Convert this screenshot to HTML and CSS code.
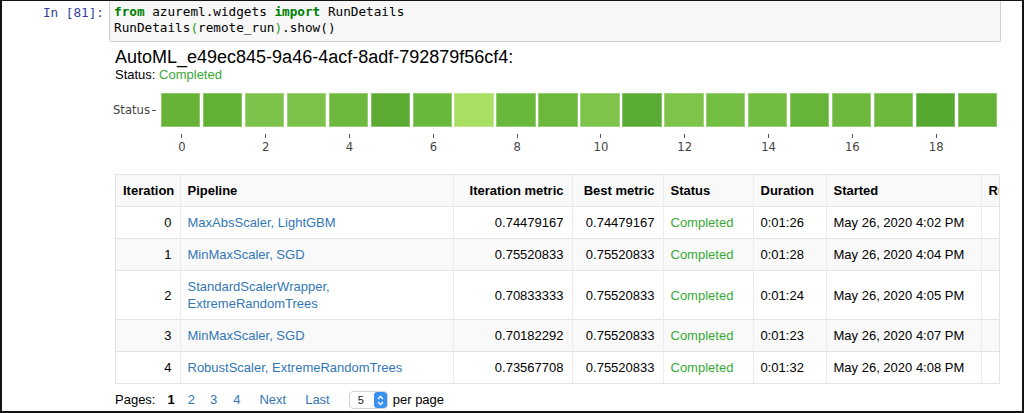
FILE: index.html
```html
<!DOCTYPE html>
<html>
<head>
<meta charset="utf-8">
<link rel="stylesheet" href="styles.css">
</head>
<body>
<div class="frame">
  <div class="cell">
    <div class="prompt">In&nbsp;[81]:</div>
    <div class="input-area">
      <div class="code"><span class="kw">from</span> azureml.widgets <span class="kw">import</span> RunDetails</div>
      <div class="code">RunDetails<span class="br">(</span>remote_run<span class="br">)</span>.show()</div>
    </div>
  </div>

  <div class="output">
    <div class="run-title">AutoML_e49ec845-9a46-4acf-8adf-792879f56cf4:</div>
    <div class="run-status">Status: <span class="ok">Completed</span></div>

    <div class="chart">
      <div class="y-axis"><span class="y-label">Status</span><span class="y-tick"></span></div>
      <div class="plot">
        <div class="cells">
          <div class="hm" style="background:#67b337"></div>
          <div class="hm" style="background:#62b034"></div>
          <div class="hm" style="background:#7dc24a"></div>
          <div class="hm" style="background:#7cc149"></div>
          <div class="hm" style="background:#6cb93d"></div>
          <div class="hm" style="background:#5caa31"></div>
          <div class="hm" style="background:#69b73b"></div>
          <div class="hm" style="background:#a9e064"></div>
          <div class="hm" style="background:#6ab83b"></div>
          <div class="hm" style="background:#6bb83c"></div>
          <div class="hm" style="background:#7ec34a"></div>
          <div class="hm" style="background:#5aab33"></div>
          <div class="hm" style="background:#7ec34a"></div>
          <div class="hm" style="background:#73bd42"></div>
          <div class="hm" style="background:#72bc42"></div>
          <div class="hm" style="background:#67b43a"></div>
          <div class="hm" style="background:#6db83d"></div>
          <div class="hm" style="background:#6cb83c"></div>
          <div class="hm" style="background:#55a82f"></div>
          <div class="hm" style="background:#64b236"></div>
        </div>
        <div class="x-axis">
          <div class="xt"><span class="tick"></span><span>0</span></div><div></div>
          <div class="xt"><span class="tick"></span><span>2</span></div><div></div>
          <div class="xt"><span class="tick"></span><span>4</span></div><div></div>
          <div class="xt"><span class="tick"></span><span>6</span></div><div></div>
          <div class="xt"><span class="tick"></span><span>8</span></div><div></div>
          <div class="xt"><span class="tick"></span><span>10</span></div><div></div>
          <div class="xt"><span class="tick"></span><span>12</span></div><div></div>
          <div class="xt"><span class="tick"></span><span>14</span></div><div></div>
          <div class="xt"><span class="tick"></span><span>16</span></div><div></div>
          <div class="xt"><span class="tick"></span><span>18</span></div><div></div>
        </div>
      </div>
    </div>

    <div class="table-wrap">
      <table class="runs">
        <colgroup>
          <col class="c-it"><col class="c-pipe"><col class="c-im"><col class="c-bm"><col class="c-st"><col class="c-du"><col class="c-sd"><col class="c-r">
        </colgroup>
        <thead>
          <tr>
            <th class="num">Iteration</th><th>Pipeline</th><th class="num">Iteration metric</th><th class="num">Best metric</th><th>Status</th><th>Duration</th><th>Started</th><th>Run Id</th>
          </tr>
        </thead>
        <tbody>
          <tr><td class="num">0</td><td><a>MaxAbsScaler, LightGBM</a></td><td class="num">0.74479167</td><td class="num">0.74479167</td><td class="ok">Completed</td><td>0:01:26</td><td>May 26, 2020 4:02 PM</td><td></td></tr>
          <tr><td class="num">1</td><td><a>MinMaxScaler, SGD</a></td><td class="num">0.75520833</td><td class="num">0.75520833</td><td class="ok">Completed</td><td>0:01:28</td><td>May 26, 2020 4:04 PM</td><td></td></tr>
          <tr><td class="num">2</td><td><a>StandardScalerWrapper, ExtremeRandomTrees</a></td><td class="num">0.70833333</td><td class="num">0.75520833</td><td class="ok">Completed</td><td>0:01:24</td><td>May 26, 2020 4:05 PM</td><td></td></tr>
          <tr><td class="num">3</td><td><a>MinMaxScaler, SGD</a></td><td class="num">0.70182292</td><td class="num">0.75520833</td><td class="ok">Completed</td><td>0:01:23</td><td>May 26, 2020 4:07 PM</td><td></td></tr>
          <tr><td class="num">4</td><td><a>RobustScaler, ExtremeRandomTrees</a></td><td class="num">0.73567708</td><td class="num">0.75520833</td><td class="ok">Completed</td><td>0:01:32</td><td>May 26, 2020 4:08 PM</td><td></td></tr>
        </tbody>
      </table>
    </div>

    <div class="pager">
      <span class="pages-label">Pages:</span>
      <span class="pg current">1</span>
      <a class="pg p2">2</a>
      <a class="pg p3">3</a>
      <a class="pg p4">4</a>
      <a class="pg next">Next</a>
      <a class="pg last">Last</a>
      <span class="select"><span class="sel-val">5</span><span class="stepper"><svg width="13" height="17" viewBox="0 0 13 17"><path d="M4 7 L6.5 4.5 L9 7" fill="none" stroke="#fff" stroke-width="1.3"/><path d="M4 10 L6.5 12.5 L9 10" fill="none" stroke="#fff" stroke-width="1.3"/></svg></span></span>
      <span class="per-page">per page</span>
    </div>
  </div>
</div>
</body>
</html>
```

FILE: styles.css
```css
html, body {
  margin: 0;
  padding: 0;
  background: #fff;
}
.frame {
  box-sizing: border-box;
  width: 1024px;
  height: 413px;
  border: 2px solid #141414;
  border-top-width: 1px;
  overflow: hidden;
  font-family: "Liberation Sans", Arial, sans-serif;
  color: #000;
}
.cell {
  display: flex;
  align-items: flex-start;
}
.prompt {
  width: 103px;
  flex: none;
  text-align: right;
  font-family: "DejaVu Sans Mono", "Liberation Mono", monospace;
  font-size: 12.7px;
  line-height: 15.5px;
  color: #303f9f;
  padding-top: 4px;
  padding-right: 5px;
  margin-left: -1px;
}
.input-area {
  width: 892px;
  flex: none;
  box-sizing: border-box;
  height: 41px;
  background: #f7f7f7;
  border: 1px solid #cfcfcf;
  border-top: none;
  border-radius: 0 0 2px 2px;
  padding: 3px 4px;
}
.code {
  font-family: "DejaVu Sans Mono", "Liberation Mono", monospace;
  font-size: 12.7px;
  line-height: 15.5px;
  color: #000;
  white-space: pre;
}
.kw { color: #008000; font-weight: bold; }
.br { color: #22a022; }

.output {
  padding-left: 111px;
}
.run-title {
  font-size: 18px;
  line-height: 21px;
  margin-top: 5px;
  margin-left: 2px;
}
.run-status {
  font-size: 13px;
  line-height: 16px;
  margin-top: -1px;
  margin-left: 2px;
}
.ok { color: #37a935; }

.chart {
  display: flex;
  margin-top: 10px;
  height: 70px;
  font-family: "DejaVu Sans", Verdana, sans-serif;
  font-size: 11.6px;
  color: #444;
}
.y-axis {
  width: 48px;
  flex: none;
  height: 34px;
  display: flex;
  align-items: center;
  justify-content: flex-end;
}
.y-label { margin-right: 2px; }
.y-tick {
  width: 5px;
  height: 1px;
  background: #555;
  margin-right: 5px;
}
.plot {
  width: 838px;
  flex: none;
}
.cells {
  display: grid;
  grid-template-columns: repeat(20, 1fr);
  column-gap: 2.5px;
  height: 34px;
  margin-right: 2px;
}
.hm {
  box-shadow: inset 0 0 0 1px rgba(255,255,255,0.28);
}
.x-axis {
  display: grid;
  grid-template-columns: repeat(20, 1fr);
  margin-top: 7px;
}
.xt {
  display: flex;
  flex-direction: column;
  align-items: center;
}
.tick {
  width: 1px;
  height: 4px;
  background: #555;
  margin-bottom: 2px;
}
.xt span:last-child { line-height: 14px; }

.table-wrap {
  width: 885px;
  box-sizing: border-box;
  border: 1px solid #e3e3e3;
  overflow: hidden;
  margin-top: 11px;
  margin-left: 2px;
}
.runs {
  border-collapse: collapse;
  table-layout: fixed;
  width: 960px;
  font-size: 13px;
  line-height: 17px;
}
.c-it { width: 64px; }
.c-pipe { width: 273px; }
.c-im { width: 119px; }
.c-bm { width: 91px; }
.c-st { width: 90px; }
.c-du { width: 73px; }
.c-sd { width: 155px; }
.c-r { width: 95px; }
.runs th, .runs td {
  padding: 7px 8px 7px 7px;
  text-align: left;
  vertical-align: middle;
  border-left: 1px solid #ececec;
  border-top: 1px solid #e3e3e3;
  overflow: hidden;
}
.runs th:first-child, .runs td:first-child { border-left: none; }
.runs thead th {
  font-weight: bold;
  background: #f9f9f9;
  border-top: none;
  white-space: nowrap;
}
.runs .num { text-align: right; }
.runs tbody tr:nth-child(even) td { background: #f9f9f9; }
.runs a { color: #3477b5; text-decoration: none; }

.pager {
  display: flex;
  align-items: center;
  font-size: 13px;
  line-height: 18px;
  margin-top: 7px;
  margin-left: 2px;
}
.pg { color: #3477b5; }
.current { color: #000; font-weight: bold; margin-left: 12px; }
.p2 { margin-left: 13px; }
.p3 { margin-left: 15px; }
.p4 { margin-left: 16px; }
.next { margin-left: 19px; }
.last { margin-left: 19px; }
.select {
  margin-left: 19px;
  width: 39px;
  height: 18px;
  box-sizing: border-box;
  border: 1px solid #d4d4d4;
  border-radius: 4px;
  display: flex;
  align-items: center;
  justify-content: space-between;
  background: #fff;
  overflow: hidden;
}
.sel-val {
  font-size: 11px;
  padding-left: 8px;
  color: #222;
}
.stepper {
  width: 13px;
  height: 16px;
  background: #3b8ff0;
  border-radius: 3px;
  display: flex;
  align-items: center;
  justify-content: center;
}
.stepper svg { display: block; }
.per-page { margin-left: 5px; }
```
